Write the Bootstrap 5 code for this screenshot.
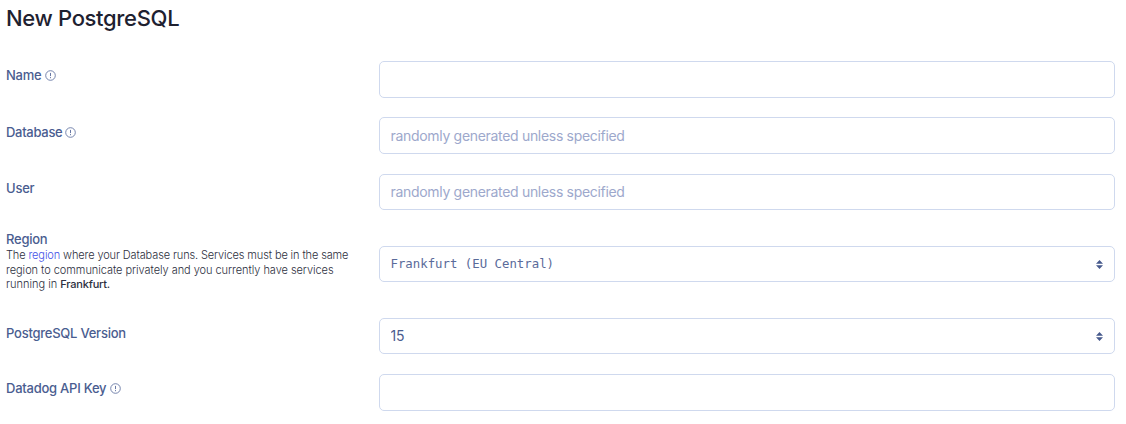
<!DOCTYPE html>
<html lang="en">
<head>
<meta charset="utf-8">
<meta name="viewport" content="width=device-width, initial-scale=1">
<title>New PostgreSQL</title>
<link href="https://cdn.jsdelivr.net/npm/bootstrap@5.3.0/dist/css/bootstrap.min.css" rel="stylesheet">
<style>
body { font-family: Inter, "Liberation Sans", sans-serif; color: #1e2130; background: #fff; overflow: hidden; }
.page { padding: 4px 11px 0 6px; }
.title { font-size: 22px; line-height: 28px; font-weight: 500; letter-spacing: -.33px; margin-bottom: 29px; }
.db-form { display: grid; grid-template-rows: 56px 57px 72px 72px 56px 37px; }
.field-row { display: grid; grid-template-columns: 373px 1fr; align-items: start; }
.field-label { font-size: 13px; line-height: 16px; font-weight: 500; color: #4a5d90; letter-spacing: -.24px; padding-top: 7px; gap: 4px; }
.field-label.raised { padding-top: 6px; }
.field-label.snug { letter-spacing: -.3px; gap: 3px; }
.info { width: 11px; height: 11px; }
.form-control.field, .form-select.field { height: 36px; padding: 0 10px 0 10.5px; font-size: 14px; line-height: 34px; border: 1px solid #cfd9ee; border-radius: 5px; color: #4a5d90; letter-spacing: -.1px; background-color: #fff; }
.form-control.field { letter-spacing: -.31px; }
.form-control.field.tall { height: 37px; }
#user { padding-bottom: 2px; }
.form-control.field::placeholder { color: #9da8cc; opacity: 1; }
.form-select.field { background-image: url("data:image/svg+xml,%3Csvg xmlns='http://www.w3.org/2000/svg' viewBox='0 0 7 9'%3E%3Cpath fill='%2346598c' d='M3.5 0 7 3.8H0zM0 5.2h7L3.5 9z'/%3E%3C/svg%3E"); background-size: 7px 9px; background-position: right 11px center; }
.form-select.mono { font-family: "DejaVu Sans Mono", monospace; font-size: 12.35px; letter-spacing: 0; color: #5a6b9a; }
.region-text { margin-top: -22px; }
.help { margin-top: -2px; font-size: 11px; line-height: 14.5px; font-weight: 300; color: #2d3040; letter-spacing: -.12px; white-space: nowrap; }
.help .second { letter-spacing: -.05px; }
.help .third { letter-spacing: 0; }
.help a { color: #4351e8; }
.help b { font-weight: 500; letter-spacing: -.2px; }
</style>
</head>
<body>
<main class="page">
  <h1 class="title">New PostgreSQL</h1>
  <form class="db-form">
    <div class="field-row">
      <label class="field-label raised d-flex align-items-center" for="name"><span>Name</span>
        <svg class="info" viewBox="0 0 11 11" fill="none" stroke="#6878a5"><circle cx="5.5" cy="5.5" r="4.8" stroke-width=".9"/><path d="M5.5 2.9v3.2M5.5 7.1v1.1"/></svg></label>
      <input class="form-control field tall" id="name">
    </div>
    <div class="field-row">
      <label class="field-label snug d-flex align-items-center" for="database"><span>Database</span>
        <svg class="info" viewBox="0 0 11 11" fill="none" stroke="#6878a5"><circle cx="5.5" cy="5.5" r="4.8" stroke-width=".9"/><path d="M5.5 2.9v3.2M5.5 7.1v1.1"/></svg></label>
      <input class="form-control field tall" id="database" placeholder="randomly generated unless specified">
    </div>
    <div class="field-row">
      <label class="field-label raised" for="user">User</label>
      <input class="form-control field" id="user" placeholder="randomly generated unless specified">
    </div>
    <div class="field-row">
      <div class="region-text">
        <label class="field-label" for="region">Region</label>
        <div class="help">The <a class="text-decoration-none" href="#">region</a> where your Database runs. Services must be in the same<br><span class="second">region to communicate privately and you currently have services</span><br><span class="third">running in <b>Frankfurt.</b></span></div>
      </div>
      <select class="form-select field mono" id="region"><option>Frankfurt (EU Central)</option></select>
    </div>
    <div class="field-row">
      <label class="field-label" for="version">PostgreSQL Version</label>
      <select class="form-select field" id="version"><option>15</option></select>
    </div>
    <div class="field-row">
      <label class="field-label raised d-flex align-items-center" for="datadog"><span>Datadog API Key</span>
        <svg class="info" viewBox="0 0 11 11" fill="none" stroke="#6878a5"><circle cx="5.5" cy="5.5" r="4.8" stroke-width=".9"/><path d="M5.5 2.9v3.2M5.5 7.1v1.1"/></svg></label>
      <input class="form-control field tall" id="datadog">
    </div>
  </form>
</main>
<script src="https://cdn.jsdelivr.net/npm/bootstrap@5.3.0/dist/js/bootstrap.bundle.min.js"></script>
</body>
</html>
